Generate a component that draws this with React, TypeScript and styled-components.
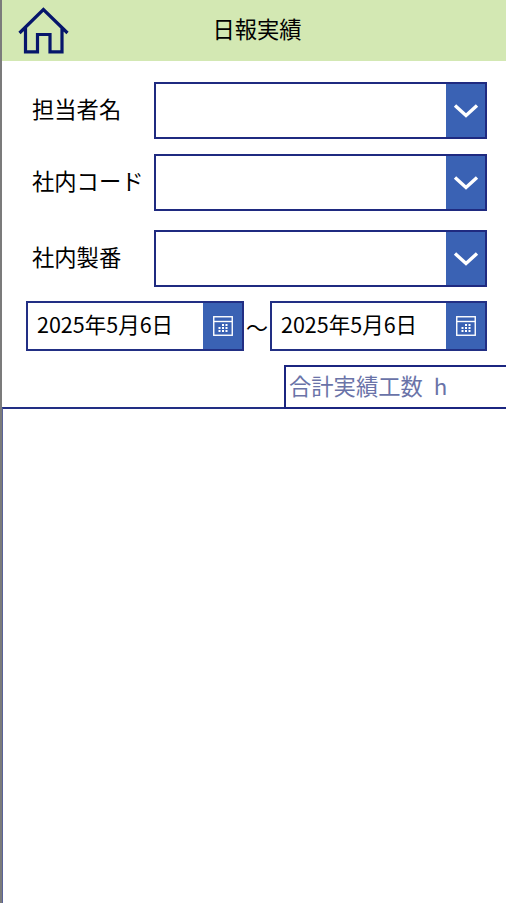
import { createGlobalStyle } from "styled-components";
import styled from "styled-components";

const GlobalStyle = createGlobalStyle`
  html, body {
    margin: 0;
    padding: 0;
    background: #ffffff;
  }
  body {
    font-family: "Noto Sans CJK JP", "Noto Sans", sans-serif;
  }
`;

const Screen = styled.div`
  box-sizing: border-box;
  width: 506px;
  height: 903px;
  border-left: 2px solid #7b7b7b;
  display: flex;
  flex-direction: column;
  overflow: hidden;
`;

const Header = styled.div`
  height: 61px;
  flex: none;
  background: #d3e8b3;
  display: grid;
  grid-template-columns: 84px 1fr 84px;
  align-items: center;
`;

const HomeButton = styled.div`
  display: flex;
  padding-left: 16px;
  margin-top: -3px;

  & svg {
    display: block;
    width: 52px;
    height: 50px;
  }
`;

const Title = styled.div`
  text-align: center;
  font-size: 22.3px;
  line-height: 30px;
  color: #000000;
  margin-left: 6px;
  margin-top: -5px;
`;

const Form = styled.div`
  display: flex;
  flex-direction: column;
  padding-top: 21px;
`;

const FieldRow = styled.div<{ $gap: number }>`
  display: flex;
  align-items: center;
  height: 57px;
  margin-bottom: ${(p) => p.$gap}px;
`;

const FieldLabel = styled.div`
  width: 152px;
  flex: none;
  padding-left: 30px;
  padding-bottom: 6px;
  box-sizing: border-box;
  font-size: 22.3px;
  color: #000000;
  white-space: nowrap;
`;

const Dropdown = styled.div`
  box-sizing: border-box;
  width: 333px;
  height: 57px;
  border: 2px solid #1f2a80;
  display: flex;
  justify-content: flex-end;
`;

const DropdownButton = styled.div`
  width: 39px;
  background: #3a62b4;
  display: flex;
  align-items: center;
  justify-content: center;

  & svg {
    display: block;
    width: 26px;
    height: 16px;
  }
`;

const DateRow = styled.div`
  display: flex;
  align-items: center;
  padding-left: 24px;
  height: 50px;
`;

const DateBox = styled.div<{ $width: number }>`
  box-sizing: border-box;
  width: ${(p) => p.$width}px;
  height: 50px;
  border: 2px solid #222f84;
  display: flex;
`;

const DateText = styled.div`
  flex: 1;
  padding-left: 9px;
  font-size: 21.5px;
  line-height: 42px;
  color: #000000;
  white-space: nowrap;
`;

const DateButton = styled.div`
  width: 39px;
  background: #3a62b4;
  display: flex;
  align-items: center;
  justify-content: center;

  & svg {
    display: block;
    width: 20px;
    height: 20px;
  }
`;

const Tilde = styled.div`
  width: 26px;
  text-align: center;
  font-size: 22px;
  line-height: 46px;
  color: #000000;
`;

const TotalRow = styled.div`
  display: flex;
  justify-content: flex-end;
  margin-top: 14px;
  position: relative;
`;

const TotalBox = styled.div`
  box-sizing: border-box;
  width: 222px;
  height: 44px;
  border: 2px solid #1b2580;
  border-right: none;
  padding-left: 3px;
  font-size: 22.3px;
  line-height: 37px;
  color: #6a73a8;
  white-space: pre;
  background: #ffffff;
`;

const Hours = styled.span`
  margin-left: 1px;
`;

const Gallery = styled.div`
  flex: 1;
  margin-top: -2px;
  border-top: 2px solid #222f84;
  border-left: 1px solid #5a6399;
  margin-left: 0;
`;

const HomeIcon = () => (
  <svg viewBox="0 0 52 50" fill="none">
    <path
      d="M1.5 29 L25.4 5.5 L49.5 29 M7.5 24 V47.8 H19.5 V30.5 H32 V47.8 H44 V24"
      stroke="#06166b"
      strokeWidth="3.2"
    />
  </svg>
);

const ChevronIcon = () => (
  <svg viewBox="0 0 26 16" fill="none">
    <path d="M2 2.5 L13 12.5 L24 2.5" stroke="#ffffff" strokeWidth="3.4" />
  </svg>
);

const CalendarIcon = () => (
  <svg viewBox="0 0 20 20" fill="none">
    <rect x="0.75" y="0.75" width="18.5" height="18.5" stroke="#ffffff" strokeWidth="1.4" />
    <path d="M1 5.5 H19" stroke="#ffffff" strokeWidth="1.4" />
    <g fill="#ffffff">
      <rect x="9" y="8" width="2" height="2" />
      <rect x="12.5" y="8" width="2" height="2" />
      <rect x="5.5" y="11" width="2" height="2" />
      <rect x="9" y="11" width="2" height="2" />
      <rect x="12.5" y="11" width="2" height="2" />
      <rect x="5.5" y="14" width="2" height="2" />
      <rect x="9" y="14" width="2" height="2" />
      <rect x="12.5" y="14" width="2" height="2" />
    </g>
  </svg>
);

const fields = [
  { label: "担当者名", gap: 15 },
  { label: "社内コード", gap: 19 },
  { label: "社内製番", gap: 14 },
];

export default function App() {
  return (
    <Screen>
      <GlobalStyle />
      <Header>
        <HomeButton>
          <HomeIcon />
        </HomeButton>
        <Title>日報実績</Title>
      </Header>
      <Form>
        {fields.map((f) => (
          <FieldRow key={f.label} $gap={f.gap}>
            <FieldLabel>{f.label}</FieldLabel>
            <Dropdown>
              <DropdownButton>
                <ChevronIcon />
              </DropdownButton>
            </Dropdown>
          </FieldRow>
        ))}
        <DateRow>
          <DateBox $width={218}>
            <DateText>2025年5月6日</DateText>
            <DateButton>
              <CalendarIcon />
            </DateButton>
          </DateBox>
          <Tilde>～</Tilde>
          <DateBox $width={217}>
            <DateText>2025年5月6日</DateText>
            <DateButton>
              <CalendarIcon />
            </DateButton>
          </DateBox>
        </DateRow>
        <TotalRow>
          <TotalBox>
            合計実績工数  <Hours>h</Hours>
          </TotalBox>
        </TotalRow>
      </Form>
      <Gallery />
    </Screen>
  );
}
